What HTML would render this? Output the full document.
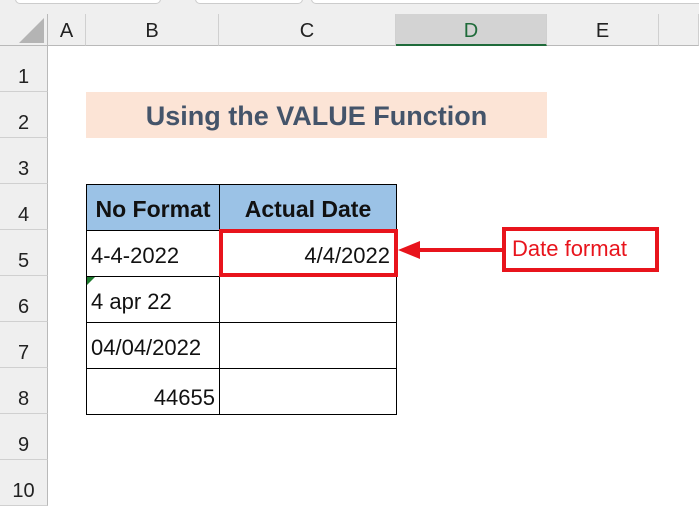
<!DOCTYPE html>
<html><head><style>
body{margin:0;width:699px;height:506px;overflow:hidden;background:#fff;font-family:"Liberation Sans",Carlito,sans-serif;position:relative}
.a{position:absolute;box-sizing:border-box}
.ch{top:14px;height:32px;background:#efefef;border-bottom:1px solid #b9b9b9;border-right:1px solid #d0d0d0;text-align:center;font-size:20px;line-height:34px;color:#222}
.rh{left:0;width:48px;height:46px;background:#efefef;border-bottom:1px solid #d0d0d0;border-right:1px solid #b9b9b9;text-align:center;font-size:20px;line-height:62px;color:#222}
.c{border:1px solid #000;font-size:22px;line-height:50px;padding:0 4px;color:#111}
</style></head><body>
<div class="a" style="left:0;top:0;width:699px;height:14px;background:#efefef"></div>
<div class="a" style="left:15px;top:-8px;width:146px;height:12px;border:1px solid #ccc;border-radius:5px;background:#fff"></div>
<div class="a" style="left:195px;top:-8px;width:108px;height:12px;border:1px solid #ccc;border-radius:5px;background:#fff"></div>
<div class="a" style="left:311px;top:-8px;width:400px;height:12px;border:1px solid #ccc;border-radius:5px;background:#fff"></div>
<div class="a ch" style="left:0;width:48px;border-right:1px solid #b9b9b9"></div>
<svg class="a" style="left:19px;top:18px" width="26" height="26"><polygon points="25,0 25,25 0,25" fill="#b4b4b4"/></svg>
<div class="a ch" style="left:48px;width:38px">A</div>
<div class="a ch" style="left:86px;width:133px">B</div>
<div class="a ch" style="left:219px;width:177px">C</div>
<div class="a ch" style="left:396px;width:151px;background:#d3d3d3;color:#1f6b3a;border-bottom:2px solid #1f6b3a">D</div>
<div class="a ch" style="left:547px;width:112px">E</div>
<div class="a ch" style="left:659px;width:40px"></div>
<div class="a rh" style="top:46px">1</div>
<div class="a rh" style="top:92px">2</div>
<div class="a rh" style="top:138px">3</div>
<div class="a rh" style="top:184px">4</div>
<div class="a rh" style="top:230px">5</div>
<div class="a rh" style="top:276px">6</div>
<div class="a rh" style="top:322px">7</div>
<div class="a rh" style="top:368px">8</div>
<div class="a rh" style="top:414px">9</div>
<div class="a rh" style="top:460px">10</div>
<div class="a" style="left:86px;top:92px;width:461px;height:46px;background:#fce4d6;text-align:center;font-size:27px;font-weight:bold;line-height:48px;color:#44546a">Using the VALUE Function</div>
<div class="a c" style="left:86px;top:184px;width:134px;height:47px;background:#9bc2e6;font-weight:bold;text-align:center;padding:0;line-height:48px;font-size:23px">No Format</div>
<div class="a c" style="left:219px;top:184px;width:178px;height:47px;background:#9bc2e6;font-weight:bold;text-align:center;line-height:48px;font-size:23px">Actual Date</div>
<div class="a c" style="left:86px;top:230px;width:134px;height:47px">4-4-2022</div>
<div class="a c" style="left:219px;top:230px;width:178px;height:47px"></div>
<div class="a c" style="left:86px;top:276px;width:134px;height:47px">4 apr 22</div>
<svg class="a" style="left:87px;top:277px" width="9" height="9"><polygon points="0,0 8,0 0,8" fill="#1e7a2e"/></svg>
<div class="a c" style="left:219px;top:276px;width:178px;height:47px"></div>
<div class="a c" style="left:86px;top:322px;width:134px;height:47px">04/04/2022</div>
<div class="a c" style="left:219px;top:322px;width:178px;height:47px"></div>
<div class="a c" style="left:86px;top:368px;width:134px;height:47px;text-align:right;line-height:58px">44655</div>
<div class="a c" style="left:219px;top:368px;width:178px;height:47px"></div>
<div class="a" style="left:219px;top:229px;width:179px;height:48px;border:4px solid #e8141c;text-align:right;padding-right:4px;font-size:22px;line-height:46px;color:#111">4/4/2022</div>
<svg class="a" style="left:396px;top:238px" width="110" height="24"><line x1="20" y1="12" x2="108" y2="12" stroke="#e8141c" stroke-width="4"/><polygon points="2,12 24,3 24,21" fill="#e8141c"/></svg>
<div class="a" style="left:502px;top:227px;width:157px;height:45px;border:4px solid #e8141c;font-size:22px;line-height:35px;color:#e8141c;padding-left:6px">Date format</div>
</body></html>
